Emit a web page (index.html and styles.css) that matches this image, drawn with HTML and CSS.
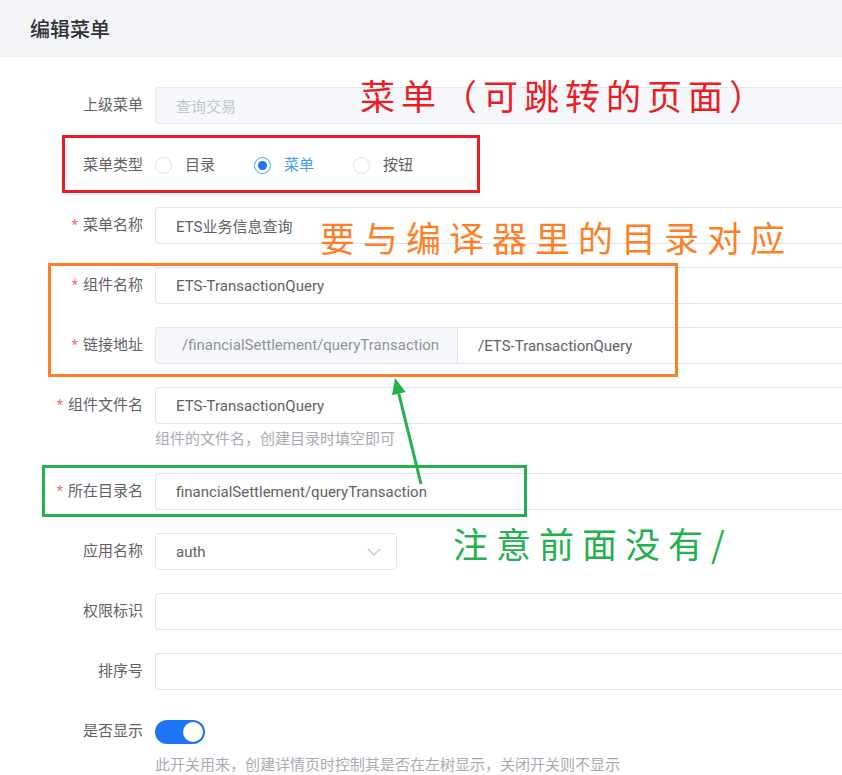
FILE: index.html
```html
<!DOCTYPE html>
<html lang="zh-CN">
<head>
  <meta charset="UTF-8" />
  <title>编辑菜单</title>
  <link rel="stylesheet" href="styles.css">
</head>
<body>
  <div class="dialog">
    <div class="dialog-header">
      <span class="dialog-title">编辑菜单</span>
    </div>

    <form class="menu-form">
      <div class="form-row">
        <label class="form-label">上级菜单</label>
        <div class="form-control">
          <input class="input" type="text" value="查询交易" disabled />
        </div>
      </div>

      <div class="form-row">
        <label class="form-label">菜单类型</label>
        <div class="form-control radio-group">
          <span class="radio"><span class="radio-dot"></span>目录</span>
          <span class="radio is-checked"><span class="radio-dot"></span>菜单</span>
          <span class="radio"><span class="radio-dot"></span>按钮</span>
        </div>
      </div>

      <div class="form-row">
        <label class="form-label required">菜单名称</label>
        <div class="form-control">
          <input class="input" type="text" value="ETS业务信息查询" readonly />
        </div>
      </div>

      <div class="form-row">
        <label class="form-label required">组件名称</label>
        <div class="form-control">
          <input class="input" type="text" value="ETS-TransactionQuery" readonly />
        </div>
      </div>

      <div class="form-row">
        <label class="form-label required">链接地址</label>
        <div class="form-control input-group">
          <span class="input-prepend">/financialSettlement/queryTransaction</span>
          <input class="input" type="text" value="/ETS-TransactionQuery" readonly />
        </div>
      </div>

      <div class="form-row">
        <label class="form-label required">组件文件名</label>
        <div class="form-control">
          <input class="input" type="text" value="ETS-TransactionQuery" readonly />
          <p class="form-help">组件的文件名，创建目录时填空即可</p>
        </div>
      </div>

      <div class="form-row">
        <label class="form-label required">所在目录名</label>
        <div class="form-control">
          <input class="input" type="text" value="financialSettlement/queryTransaction" readonly />
        </div>
      </div>

      <div class="form-row">
        <label class="form-label">应用名称</label>
        <div class="form-control">
          <div class="select">
            <span>auth</span>
            <svg class="select-arrow" width="14" height="8" viewBox="0 0 14 8">
              <path d="M1 1l6 6 6-6" fill="none" stroke="#c0c4cc" stroke-width="1.2" />
            </svg>
          </div>
        </div>
      </div>

      <div class="form-row">
        <label class="form-label">权限标识</label>
        <div class="form-control">
          <input class="input" type="text" value="" readonly />
        </div>
      </div>

      <div class="form-row">
        <label class="form-label">排序号</label>
        <div class="form-control">
          <input class="input" type="text" value="" readonly />
        </div>
      </div>

      <div class="form-row">
        <label class="form-label">是否显示</label>
        <div class="form-control">
          <div class="switch-line"><span class="switch is-on"><span class="switch-knob"></span></span></div>
          <p class="form-help">此开关用来，创建详情页时控制其是否在左树显示，关闭开关则不显示</p>
        </div>
      </div>
    </form>

    <!-- 标注 -->
    <svg class="marks" width="842" height="775" viewBox="0 0 842 775">
      <rect x="63.5" y="136.5" width="415" height="55" fill="none" stroke="#ed1c24" stroke-width="3" />
      <rect x="49.5" y="264.5" width="627" height="111" fill="none" stroke="#ff7f27" stroke-width="3" />
      <rect x="43.5" y="466.5" width="482" height="49" fill="none" stroke="#22b14c" stroke-width="3" />
      <line x1="421" y1="484" x2="398.8" y2="393.6" stroke="#22b14c" stroke-width="3" />
      <polygon points="395,378 405.6,391.9 392,395.3" fill="#22b14c" />
    </svg>
    <div class="note note-red">菜单（可跳转的页面）</div>
    <div class="note note-orange">要与编译器里的目录对应</div>
    <div class="note note-green">注意前面没有/</div>
  </div>
</body>
</html>
```

FILE: styles.css
```css
* {
  box-sizing: border-box;
}
body {
  margin: 0;
  background: #fff;
  font-family: Roboto, "Noto Sans CJK SC", sans-serif;
  overflow: hidden;
}
.dialog {
  position: relative;
  width: 100%;
  height: 775px;
  background: #fff;
  overflow: hidden;
}
.dialog-header {
  height: 57px;
  background: #f4f5f9;
  padding-left: 30px;
  display: flex;
  align-items: center;
}
.dialog-title {
  font-size: 20px;
  font-weight: 500;
  color: #303133;
}

.menu-form {
  padding-top: 30px;
}
.form-row {
  display: grid;
  grid-template-columns: 143px 1fr;
  column-gap: 12px;
  margin-bottom: 23px;
}
.form-label {
  text-align: right;
  line-height: 37px;
  font-size: 15px;
  color: #606266;
}
.form-label.required::before {
  content: "*";
  color: #f56c6c;
  margin-right: 5px;
}
.form-control {
  min-height: 37px;
}
/* 输入框右侧超出窗口，不画右边框 */
.input {
  display: block;
  width: 100%;
  height: 37px;
  padding: 0 20px;
  font-family: inherit;
  font-size: 15px;
  color: #606266;
  background: #fff;
  border: 1px solid #dfe3ea;
  border-right: none;
  border-radius: 4px 0 0 4px;
  outline: none;
}
.input:disabled {
  background: #f5f7fa;
  border-color: #e4e7ed;
  color: #c0c4cc;
}
.form-help {
  margin: 4px 0 0;
  line-height: 22px;
  font-size: 15px;
  color: #a8abb2;
}

/* radio */
.radio-group {
  display: flex;
  align-items: center;
}
.radio {
  display: flex;
  align-items: center;
  margin-right: 39px;
  font-size: 15px;
  line-height: 17px;
  color: #606266;
}
.radio-dot {
  width: 17px;
  height: 17px;
  margin-right: 13px;
  border: 1px solid #dcdfe6;
  border-radius: 50%;
  background: #fff;
  position: relative;
}
.radio.is-checked {
  color: #409eff;
}
.radio.is-checked .radio-dot {
  border-color: #409eff;
}
.radio.is-checked .radio-dot::after {
  content: "";
  position: absolute;
  left: 3px;
  top: 3px;
  width: 9px;
  height: 9px;
  border-radius: 50%;
  background: #1f74f5;
}

/* input group */
.input-group {
  display: flex;
}
.input-prepend {
  flex: 0 0 302px;
  height: 37px;
  line-height: 35px;
  padding-left: 26px;
  font-size: 15px;
  color: #909399;
  background: #f5f7fa;
  border: 1px solid #dfe3ea;
  border-right: none;
  border-radius: 4px 0 0 4px;
  white-space: nowrap;
  overflow: hidden;
}
.input-group .input {
  border-radius: 0;
}

/* select */
.select {
  width: 242px;
  height: 37px;
  padding: 0 15px 0 20px;
  display: flex;
  align-items: center;
  justify-content: space-between;
  font-size: 15px;
  color: #606266;
  border: 1px solid #dfe3ea;
  border-radius: 4px;
}

/* switch */
.switch-line {
  height: 37px;
  display: flex;
  align-items: center;
}
.switch {
  width: 50px;
  height: 24px;
  border-radius: 12px;
  background: #dcdfe6;
  padding: 2px;
  display: flex;
}
.switch.is-on {
  background: #1f74f5;
  justify-content: flex-end;
}
.switch-knob {
  width: 20px;
  height: 20px;
  border-radius: 50%;
  background: #fff;
}

/* 标注 */
.marks {
  position: absolute;
  left: 0;
  top: 0;
  pointer-events: none;
}
.note {
  position: absolute;
  font-family: "Noto Sans CJK SC", sans-serif;
  font-size: 35px;
  line-height: 40px;
  white-space: nowrap;
}
.note-red {
  left: 360px;
  top: 75px;
  color: #ed1c24;
  letter-spacing: 6px;
}
.note-orange {
  left: 320px;
  top: 217px;
  color: #ff7f27;
  letter-spacing: 8px;
}
.note-green {
  left: 453px;
  top: 523px;
  color: #22b14c;
  letter-spacing: 8px;
}
```
